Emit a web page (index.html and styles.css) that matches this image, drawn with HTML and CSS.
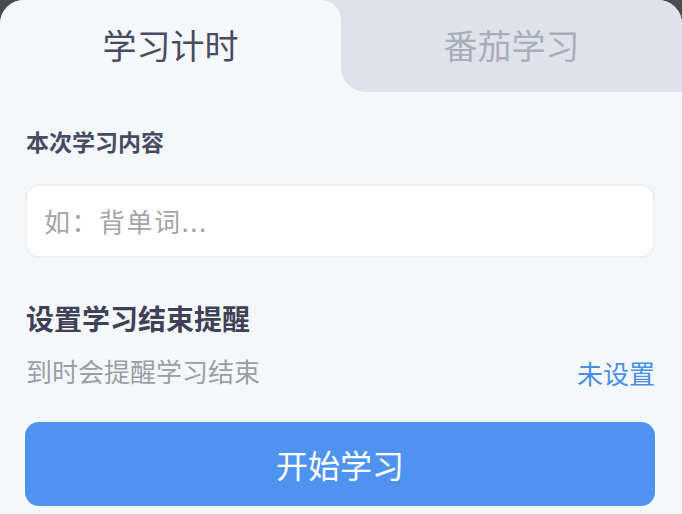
FILE: index.html
```html
<!DOCTYPE html>
<html lang="zh-CN">
<head>
<meta charset="utf-8">
<title>学习计时</title>
<link rel="stylesheet" href="styles.css">
</head>
<body>
<div class="card">
  <div class="tabs">
    <div class="tab tab-active">学习计时</div>
    <div class="tab tab-inactive">番茄学习</div>
  </div>
  <div class="content">
    <div class="label">本次学习内容</div>
    <div class="input"><span class="placeholder">如：背单词...</span></div>
    <div class="section-title">设置学习结束提醒</div>
    <div class="row">
      <span class="hint">到时会提醒学习结束</span>
      <span class="link">未设置</span>
    </div>
    <div class="btn">开始学习</div>
  </div>
</div>
</body>
</html>
```
FILE: styles.css
```css
html, body {
  margin: 0;
  padding: 0;
}
body {
  background: #4b4b4d;
  font-family: "Noto Sans CJK SC", "Noto Sans", sans-serif;
  width: 682px;
  height: 514px;
  overflow: hidden;
}
.card {
  background: #f5f8fb;
  border-radius: 24px 24px 0 0;
  overflow: hidden;
  height: 514px;
}
.tabs {
  display: flex;
  height: 92px;
  background: linear-gradient(to bottom, #dfe3e9 0, #dfe3e9 46px, #f5f8fb 46px);
}
.tab {
  display: flex;
  align-items: center;
  justify-content: center;
  font-size: 34px;
  line-height: 1;
  padding-bottom: 2px;
  box-sizing: border-box;
}
.tab-active {
  width: 341px;
  background: #f5f8fb;
  color: #484a62;
  border-radius: 24px 20px 0 0;
}
.tab-inactive {
  flex: 1;
  background: #dfe3e9;
  color: #a9aebb;
  border-radius: 0 24px 0 25px;
}
.content {
  padding: 0 27px 0 25px;
  display: flex;
  flex-direction: column;
}
.label {
  margin-top: 34px;
  font-size: 23px;
  font-weight: 700;
  color: #484a62;
  line-height: 30px;
  padding-left: 1px;
}
.input {
  margin-top: 28px;
  height: 74px;
  box-sizing: border-box;
  background: #ffffff;
  border: 2px solid #eceef2;
  border-radius: 14px;
  display: flex;
  align-items: center;
  padding-left: 17px;
}
.placeholder {
  font-size: 26px;
  color: #a3a3a8;
  line-height: 1;
  letter-spacing: 1.5px;
}
.section-title {
  margin-top: 43px;
  font-size: 28px;
  font-weight: 700;
  color: #3f4157;
  line-height: 34px;
  padding-left: 1px;
}
.row {
  margin-top: 19px;
  display: flex;
  justify-content: space-between;
  align-items: flex-end;
  height: 32px;
}
.hint {
  font-size: 26px;
  color: #9b9da7;
  line-height: 30px;
  padding-left: 1px;
}
.link {
  font-size: 26px;
  color: #4a8ee3;
  line-height: 30px;
  margin-bottom: -2px;
}
.btn {
  margin-top: 36px;
  height: 84px;
  background: #4f93f1;
  border-radius: 14px;
  color: #ffffff;
  font-size: 32px;
  display: flex;
  align-items: center;
  justify-content: center;
  line-height: 1;
}
```
